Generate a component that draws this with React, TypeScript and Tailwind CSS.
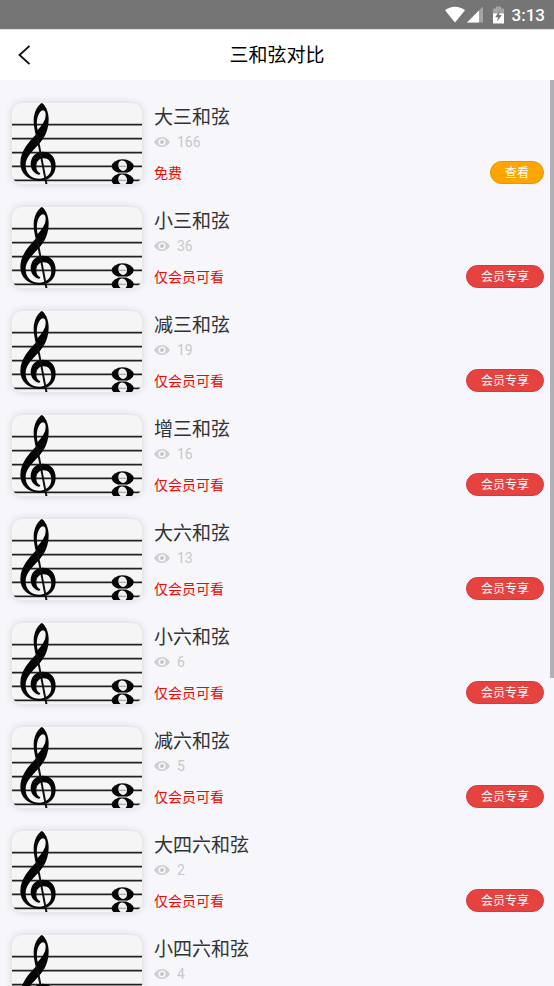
type Chord = { name: string; views: number; free?: boolean };

const chords: Chord[] = [
  { name: "大三和弦", views: 166, free: true },
  { name: "小三和弦", views: 36 },
  { name: "减三和弦", views: 19 },
  { name: "增三和弦", views: 16 },
  { name: "大六和弦", views: 13 },
  { name: "小六和弦", views: 6 },
  { name: "减六和弦", views: 5 },
  { name: "大四六和弦", views: 2 },
  { name: "小四六和弦", views: 4 },
];

function StatusBar() {
  return (
    <div className="flex h-[29px] shrink-0 items-center justify-end bg-[#757575] pr-[9px] text-white">
      <svg className="h-[17px] w-5" viewBox="0 0 20 17" aria-hidden="true">
        <path d="M0 4.200C2.800 2 6.200.8 10 .8s7.200 1.200 10 3.400L10 16.500Z" fill="#fff" />
      </svg>
      <svg className="ml-[2px] h-[17px] w-4" viewBox="0 0 16 17" aria-hidden="true">
        <path d="M16 0.500V16.500H0Z" fill="#fff" fillOpacity=".35" />
        <path d="M12 4.500V16.500H0Z" fill="#fff" />
      </svg>
      <svg className="ml-[10px] h-[18px] w-[11px]" viewBox="0 0 11 18" aria-hidden="true">
        <path d="M3 0.500H8V2.500H11V8H0V2.500H3Z" fill="#fff" fillOpacity=".35" />
        <path d="M0 7.500H11V17.500H0Z" fill="#fff" />
        <path d="M6.800 4.500 2.200 11.200H5L4.200 15.500 8.800 9H6Z" fill="#757575" />
      </svg>
      <span className="ml-2 font-[Roboto,sans-serif] text-[17px] leading-5 font-medium">3:13</span>
    </div>
  );
}

function Score() {
  return (
    <svg
      className="block h-[81px] w-[130px] shrink-0 rounded-[10px] bg-[#f5f5f5] shadow-[0_0_8px_rgba(0,0,0,0.15)]"
      viewBox="0 0 390 243"
      role="img"
      aria-label="五线谱"
    >
      <path d="M0 65H390M0 107H390M0 149H390M0 190H390M0 232H390" stroke="#222" strokeWidth="5" />
      <path
        d="M89 0C78 6 65 27 65 52C65 70 68 82 71 95C52 116 25 142 25 181C25 212 49 233 82 233C111 233 131 216 131 188C131 162 115 146 93 146C71 146 56 162 56 183C56 199 66 212 82 216L85 211C77 207 73 200 73 191C73 175 82 166 95 166C109 166 118 176 118 193C118 214 103 227 82 227C55 227 41 210 41 186C41 160 66 141 86 117C101 99 110 77 110 48C110 25 99 4 89 0ZM92 22C98 22 101 28 101 36C101 52 90 67 77 81C71 57 76 28 92 22Z"
        fill="#050505"
        fillRule="evenodd"
      />
      <path d="M74 91 104 247" stroke="#111" strokeWidth="6" />
      <g fill="#050505">
        <ellipse cx="332" cy="190" rx="33" ry="21" />
        <ellipse cx="332" cy="232" rx="33" ry="21" />
      </g>
      <g fill="#f0f0f0">
        <ellipse cx="332" cy="188" rx="13" ry="16" transform="rotate(-15 332 188)" />
        <ellipse cx="332" cy="230" rx="13" ry="16" transform="rotate(-15 332 230)" />
      </g>
      <path d="M320 190H344M320 232H344" stroke="#aaa" strokeWidth="4" />
      <path d="M320 210H344" stroke="#777" strokeWidth="6" />
    </svg>
  );
}

function Eye() {
  return (
    <svg className="h-[10px] w-4" viewBox="0 0 16 10" aria-hidden="true">
      <path d="M0 5C2 1.700 4.800 0 8 0s6 1.700 8 5c-2 3.300-4.800 5-8 5S2 8.300 0 5Z" fill="#cfcfd1" />
      <circle cx="8" cy="5" r="3.600" fill="#f6f6fb" />
      <circle cx="8" cy="5" r="2" fill="#c8c8ca" />
    </svg>
  );
}

function ChordRow({ chord }: { chord: Chord }) {
  return (
    <li className="flex shrink-0 gap-3">
      <Score />
      <div className="flex min-w-0 flex-1 flex-col justify-between">
        <div>
          <h2 className="text-[19px] leading-[26px] text-[#333]">{chord.name}</h2>
          <div className="flex h-[26px] items-center gap-[7px] text-[#c8c8ca]">
            <Eye />
            <span className="font-[Roboto,sans-serif] text-sm">{chord.views}</span>
          </div>
        </div>
        <div className="flex items-end justify-between">
          <span className="text-sm leading-6 text-[#ff0000]">
            {chord.free ? "免费" : "仅会员可看"}
          </span>
          <button
            type="button"
            className={`h-[23px] rounded-full border px-[14px] pb-[2px] text-xs leading-5 text-white ${
              chord.free ? "border-[#e69500] bg-[#ffa500]" : "border-[#cf3c3c] bg-[#e64340]"
            }`}
          >
            {chord.free ? "查看" : "会员专享"}
          </button>
        </div>
      </div>
    </li>
  );
}

export default function App() {
  return (
    <div className="flex h-screen flex-col bg-[#f6f6fb] font-['Noto_Sans_CJK_SC',sans-serif]">
      <StatusBar />
      <header className="grid h-[51px] shrink-0 grid-cols-[1fr_auto_1fr] items-center border-t border-[#e4e4e4] bg-white">
        <button type="button" aria-label="返回" className="ml-[18px] w-3">
          <svg className="h-5 w-3" viewBox="0 0 12 20" fill="none" aria-hidden="true">
            <path d="M11.500 1 1.500 10l10 9" stroke="#111" strokeWidth="1.800" />
          </svg>
        </button>
        <h1 className="pb-[2px] text-[19px] leading-7 font-normal text-black">三和弦对比</h1>
      </header>
      <div className="relative min-h-0 flex-1">
        <main className="h-full overflow-y-auto [scrollbar-width:none]">
          <ul className="flex flex-col gap-[23px] pt-[23px] pr-[10px] pb-6 pl-3">
            {chords.map((chord) => (
              <ChordRow key={chord.name} chord={chord} />
            ))}
          </ul>
        </main>
        <div className="absolute top-0 right-0 h-[66%] w-1 bg-[#b0b0b4]" />
      </div>
    </div>
  );
}
